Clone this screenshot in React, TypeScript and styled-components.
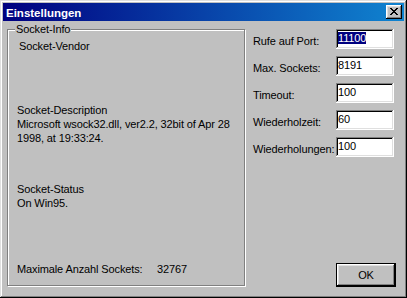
import React from "react";
import styled, { createGlobalStyle } from "styled-components";

const GlobalStyle = createGlobalStyle`
  html, body {
    margin: 0;
    padding: 0;
    background: #c0c0c0;
  }
  body {
    font-family: "Liberation Sans", Arial, sans-serif;
    font-size: 11px;
    letter-spacing: -0.12px;
    color: #000;
  }
`;

const fields = [
  { label: "Rufe auf Port:", value: "11100", selected: true },
  { label: "Max. Sockets:", value: "8191" },
  { label: "Timeout:", value: "100" },
  { label: "Wiederholzeit:", value: "60" },
  { label: "Wiederholungen:", value: "100" },
];

function CloseGlyph() {
  return (
    <svg width="8" height="7" viewBox="0 0 8 7" shapeRendering="crispEdges">
      <path
        fill="#000"
        d="M0 0h2v1H0zM6 0h2v1H6zM1 1h2v1H1zM5 1h2v1H5zM2 2h4v1H2zM3 3h2v1H3zM2 4h4v1H2zM1 5h2v1H1zM5 5h2v1H5zM0 6h2v1H0zM6 6h2v1H6z"
      />
    </svg>
  );
}

export default function App() {
  return (
    <>
      <GlobalStyle />
      <Window>
        <TitleBar>
          <Title>Einstellungen</Title>
          <CloseButton>
            <CloseGlyph />
          </CloseButton>
        </TitleBar>
        <Body>
          <GroupBox>
            <Legend>Socket-Info</Legend>
            <Section $height={64} $indent={2}>
              <Line>Socket-Vendor</Line>
            </Section>
            <Section $height={79}>
              <Line>Socket-Description</Line>
              <Line>
                Microsoft wsock32.dll, ver2.2, 32bit of Apr 28
                <br />
                1998, at 19:33:24.
              </Line>
            </Section>
            <Section $height={80}>
              <Line>Socket-Status</Line>
              <Line>On Win95.</Line>
            </Section>
            <MaxRow>
              <MaxLabel>Maximale Anzahl Sockets:</MaxLabel>
              <span>32767</span>
            </MaxRow>
          </GroupBox>
          <SideColumn>
            <FieldList>
              {fields.map((f) => (
                <FieldRow key={f.label}>
                  <FieldLabel>{f.label}</FieldLabel>
                  <Field>
                    {f.selected ? <Selected>{f.value}</Selected> : f.value}
                  </Field>
                </FieldRow>
              ))}
            </FieldList>
            <OkButton>OK</OkButton>
          </SideColumn>
        </Body>
      </Window>
    </>
  );
}

const Window = styled.div`
  box-sizing: border-box;
  width: 407px;
  height: 298px;
  padding: 3px;
  background: #c0c0c0;
  box-shadow: inset -1px -1px #000, inset 1px 1px #dfdfdf,
    inset -2px -2px #808080, inset 2px 2px #fff;
  display: flex;
  flex-direction: column;
`;

const TitleBar = styled.div`
  height: 18px;
  display: flex;
  align-items: center;
  justify-content: space-between;
  padding: 0 2px 0 3px;
  background: linear-gradient(90deg, #000080, #1084d0);
`;

const Title = styled.span`
  color: #fff;
  font-weight: bold;
  font-size: 11.5px;
  letter-spacing: 0;
  line-height: 18px;
  padding-top: 1px;
`;

const CloseButton = styled.div`
  box-sizing: border-box;
  width: 16px;
  height: 14px;
  display: flex;
  align-items: center;
  justify-content: center;
  padding: 0 1px 1px 0;
  background: #c0c0c0;
  box-shadow: inset -1px -1px #000, inset 1px 1px #fff,
    inset -2px -2px #808080, inset 2px 2px #dfdfdf;
`;

const Body = styled.div`
  display: flex;
  padding: 8px 0 0 4px;
`;

const GroupBox = styled.div`
  position: relative;
  box-sizing: border-box;
  width: 238px;
  height: 257px;
  padding: 9px 0 0 9px;
  border: 1px solid #808080;
  box-shadow: 1px 1px 0 #fff, inset 1px 1px 0 #fff;
  display: flex;
  flex-direction: column;
  line-height: 14px;
`;

const Legend = styled.span`
  position: absolute;
  top: -8px;
  left: 7px;
  padding: 0 1px;
  background: #c0c0c0;
  line-height: 14px;
`;

const Section = styled.div<{ $height: number; $indent?: number }>`
  height: ${(p) => p.$height}px;
  padding-left: ${(p) => p.$indent ?? 0}px;
`;

const Line = styled.div`
  white-space: nowrap;
`;

const MaxRow = styled.div`
  display: flex;
`;

const MaxLabel = styled.span`
  width: 140px;
`;

const SideColumn = styled.div`
  width: 143px;
  height: 258px;
  margin-left: 8px;
  display: flex;
  flex-direction: column;
  justify-content: space-between;
  align-items: flex-end;
`;

const FieldList = styled.div`
  width: 100%;
  display: flex;
  flex-direction: column;
  gap: 7px;
`;

const FieldRow = styled.div`
  display: flex;
  align-items: center;
  height: 20px;
`;

const FieldLabel = styled.span`
  width: 83px;
  padding-top: 3px;
  white-space: nowrap;
`;

const Field = styled.div`
  box-sizing: border-box;
  width: 58px;
  height: 20px;
  padding: 3px 1px 0 2px;
  background: #fff;
  line-height: 13px;
  box-shadow: inset -1px -1px #fff, inset 1px 1px #808080,
    inset -2px -2px #dfdfdf, inset 2px 2px #000;
`;

const Selected = styled.span`
  background: #000080;
  color: #fff;
`;

const OkButton = styled.div`
  box-sizing: border-box;
  width: 60px;
  height: 24px;
  border: 1px solid #000;
  background: #c0c0c0;
  display: flex;
  align-items: center;
  justify-content: center;
  font-size: 11px;
  box-shadow: inset -1px -1px #000, inset 1px 1px #fff,
    inset -2px -2px #808080, inset 2px 2px #dfdfdf;
`;
